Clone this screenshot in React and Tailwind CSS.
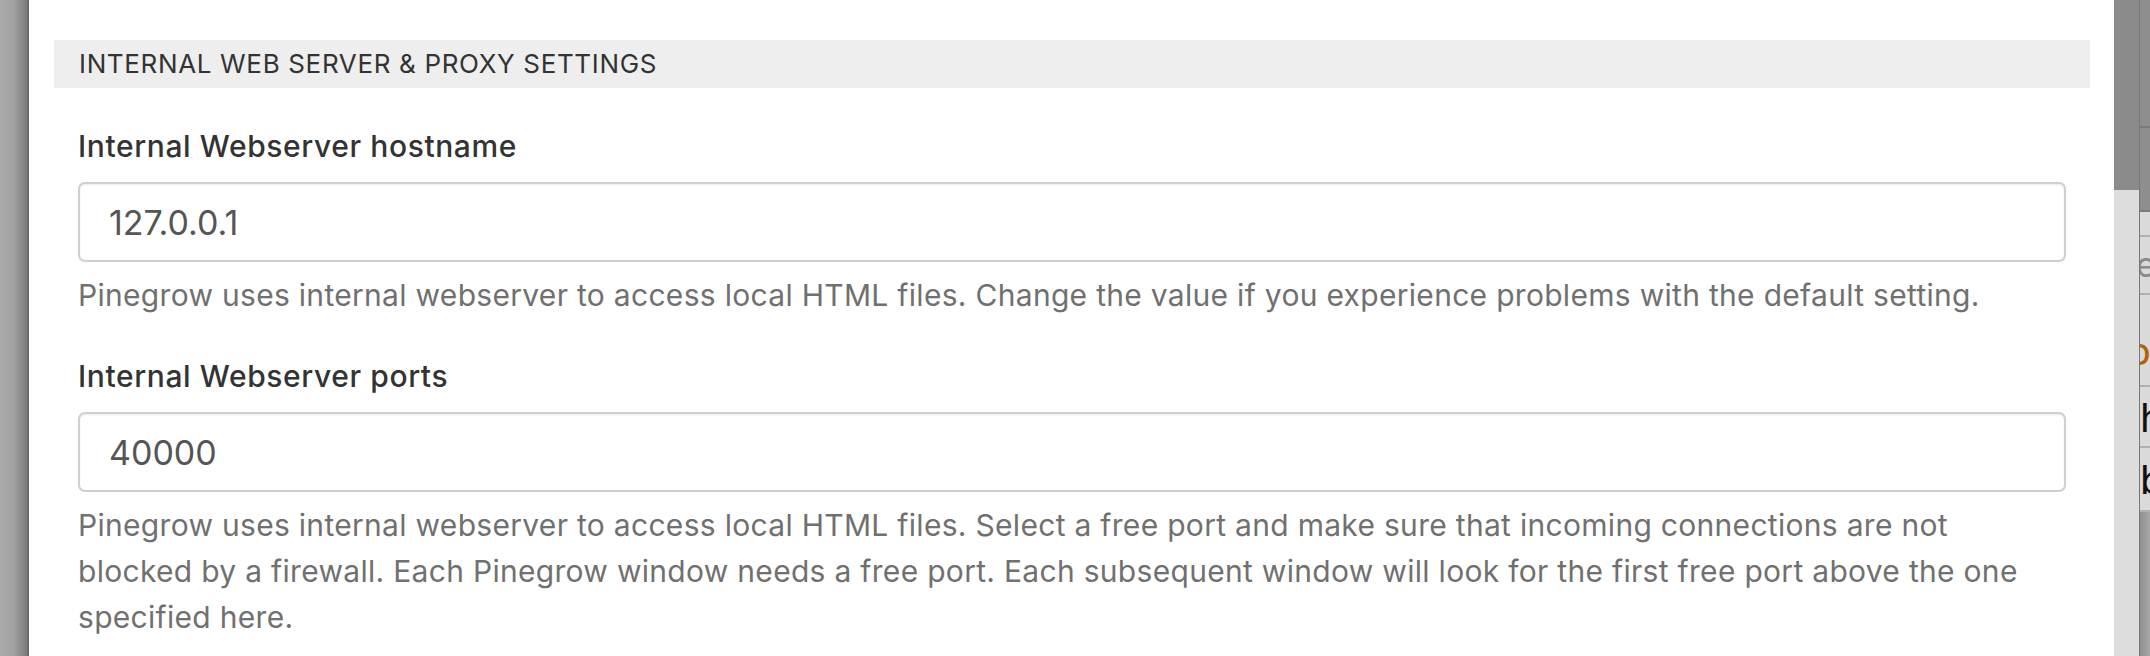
import React from "react";

const font = { fontFamily: "Inter, 'Noto Sans', 'Liberation Sans', sans-serif" };

function Field({ label, value, children }) {
  return (
    <div className="flex flex-col">
      <div className="mt-[40px] h-[36px] text-[30px] leading-[36px] font-medium text-[#333333] tracking-[0.02em]">{label}</div>
      <div className="mt-[18px] h-[80px] flex items-center rounded-[7px] border-2 border-[#cfcfcf] bg-white pl-[29px] shadow-[inset_0_1px_2px_rgba(0,0,0,0.08)]">
        <span className="text-[34px] text-[#555555]">{value}</span>
      </div>
      <div className="mt-[10px] text-[30px] leading-[46px] text-[#707070] tracking-[0.01em] whitespace-nowrap">{children}</div>
    </div>
  );
}

export default function App() {
  return (
    <div className="flex w-[2150px] h-[656px] overflow-hidden bg-white" style={font}>
      <div className="w-[29px] shrink-0 bg-gradient-to-r from-[#ababab] via-[#a2a2a2] to-[#7c7c7c] border-r-2 border-[#6c6c6c]" />
      <main className="w-[2085px] shrink-0 bg-white pt-[40px] pl-[25px] pr-[24px]">
        <div className="h-[48px] bg-[#eeeeee] pl-[25px] text-[26px] leading-[48px] text-[#333333] tracking-[0.025em]">
          INTERNAL WEB SERVER &amp; PROXY SETTINGS
        </div>
        <div className="px-[24px]">
          <Field label="Internal Webserver hostname" value="127.0.0.1">
            Pinegrow uses internal webserver to access local HTML files. Change the value if you experience problems with the default setting.
          </Field>
          <Field label="Internal Webserver ports" value="40000">
            Pinegrow uses internal webserver to access local HTML files. Select a free port and make sure that incoming connections are not
            <br />
            blocked by a firewall. Each Pinegrow window needs a free port. Each subsequent window will look for the first free port above the one
            <br />
            specified here.
          </Field>
        </div>
      </main>
      <div className="w-[25px] shrink-0 flex flex-col">
        <div className="h-[190px] bg-[#8b8b8b]" />
        <div className="flex-1 bg-[#dddddd]" />
      </div>
      <div className="w-[1px] shrink-0 bg-[#777777]" />
      <div className="flex-1 flex flex-col overflow-hidden">
        <div className="h-[128px] shrink-0 bg-[#8e8e8e] border-b-2 border-[#7a7a7a]" />
        <div className="h-[84px] shrink-0 bg-[#8e8e8e] border-b-2 border-[#7a7a7a]" />
        <div className="h-[25px] shrink-0 bg-[#dadada] border-b-2 border-[#b0b0b0]" />
        <div className="h-[58px] shrink-0 bg-[#dadada] border-b-2 border-[#b0b0b0] text-[34px] leading-[56px] text-[#8a8a8a] -ml-[4px] whitespace-nowrap">ex</div>
        <div className="h-[92px] shrink-0 bg-[#dadada] border-b-2 border-[#b0b0b0] text-[28px] font-semibold leading-[120px] text-[#b06400] -ml-[10px] whitespace-nowrap">DE</div>
        <div className="h-[61px] shrink-0 bg-[#dadada] border-b-2 border-[#b0b0b0] text-[40px] leading-[61px] text-[#111111] whitespace-nowrap">h</div>
        <div className="h-[64px] shrink-0 bg-[#dadada] border-b-2 border-[#b0b0b0] text-[40px] leading-[64px] text-[#111111] whitespace-nowrap">b</div>
        <div className="flex-1 bg-gradient-to-r from-[#8f8f8f] to-[#a8a8a8]" />
      </div>
    </div>
  );
}
